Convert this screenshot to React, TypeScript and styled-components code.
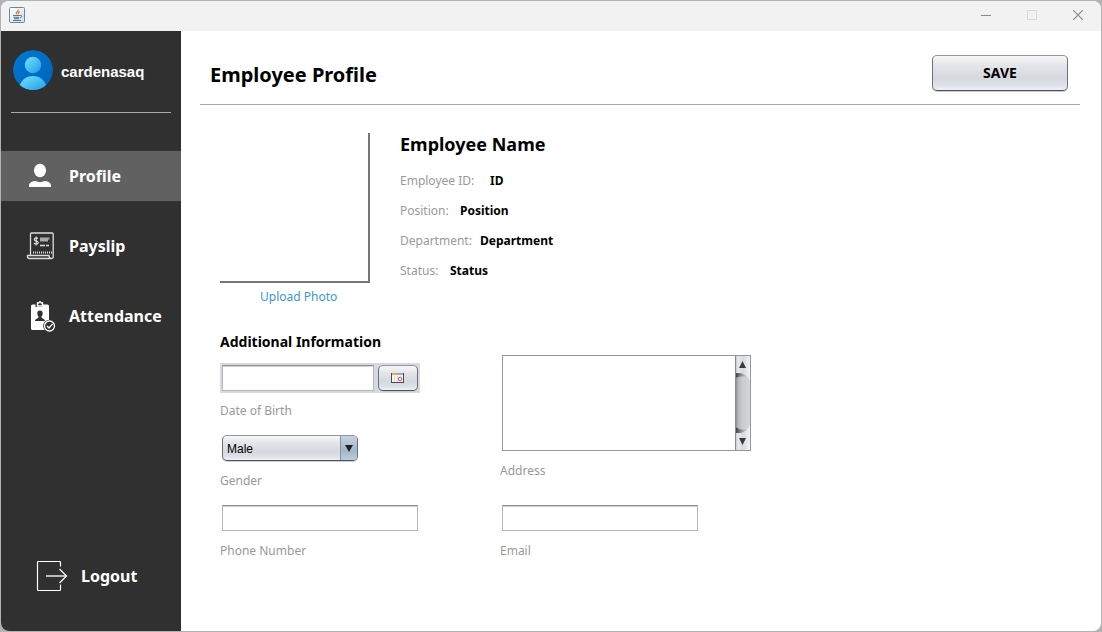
import React from "react";
import styled, { createGlobalStyle, css } from "styled-components";

const GlobalStyle = createGlobalStyle`
  * { box-sizing: border-box; }
  body {
    margin: 0;
    background: #b2b2b2;
    color: #000;
    font-family: "Noto Sans", "Open Sans", sans-serif;
    font-size: 12px;
  }
  button, input, select, textarea { font: inherit; color: inherit; margin: 0; }
  h1, h2, h3, p, dl, dd, dt { margin: 0; }
`;

const raised = css`
  border: 1px solid #6b6f78;
  border-top-color: #94989f;
  border-bottom-color: #4d525c;
  border-radius: 5px;
  background: linear-gradient(#f6f7f8 0%, #e2e4e8 30%, #d5d8de 65%, #dde1e8 85%, #eef1f6 100%);
  box-shadow: 0 1px 0 #c9ccd2;
`;

const Desktop = styled.div`
  display: flex;
  min-height: 100vh;
  padding: 1px;
`;

const Window = styled.div`
  display: flex;
  flex: 1;
  flex-direction: column;
  overflow: hidden;
  border-radius: 8px;
  background: #fff;
`;

const TitleBar = styled.header`
  display: flex;
  align-items: center;
  justify-content: space-between;
  height: 30px;
  padding: 0 0 2px 8px;
  background: #f2f2f2;
`;

const WindowControls = styled.div`
  display: flex;
`;

const WindowButton = styled.button`
  display: grid;
  place-items: center;
  width: 46px;
  height: 28px;
  padding: 0;
  border: 0;
  background: none;
  color: #8a8a8a;
  &:disabled { color: #dadada; }
`;

const Body = styled.div`
  display: flex;
  flex: 1;
`;

const Sidebar = styled.aside`
  display: flex;
  flex: 0 0 180px;
  flex-direction: column;
  padding-bottom: 30px;
  background: #303030;
  color: #fff;
`;

const User = styled.div`
  display: flex;
  align-items: center;
  gap: 8px;
  height: 82px;
  margin: 0 10px;
  padding: 0 2px 4px;
  border-bottom: 1px solid #a3a8ae;
  font: bold 15px "Liberation Sans", Arial, sans-serif;
`;

const UserName = styled.span`
  padding-top: 4px;
`;

const Nav = styled.nav`
  display: flex;
  flex: 1;
  flex-direction: column;
  gap: 20px;
  padding-top: 38px;
`;

const NavItem = styled.a<{ $active?: boolean; $last?: boolean }>`
  display: flex;
  align-items: center;
  gap: ${(p) => (p.$last ? 12 : 10)}px;
  height: 50px;
  margin-top: ${(p) => (p.$last ? "auto" : 0)};
  padding-left: ${(p) => (p.$last ? 34 : 24)}px;
  background: ${(p) => (p.$active ? "#616161" : "transparent")};
  color: #fff;
  font-size: 16px;
  font-weight: bold;
  text-decoration: none;
`;

const Main = styled.main`
  flex: 1;
  min-width: 0;
  padding: 0 21px 0 19px;
`;

const PageHeader = styled.div`
  display: flex;
  align-items: center;
  justify-content: space-between;
  height: 74px;
  padding: 10px 12px 0 10px;
  border-bottom: 1px solid #a3a6b1;
`;

const PageTitle = styled.h1`
  padding-top: 4px;
  font-size: 20px;
  line-height: 28px;
`;

const SaveButton = styled.button`
  ${raised}
  width: 136px;
  height: 36px;
  font-size: 14px;
  font-weight: bold;
`;

const Summary = styled.section`
  display: flex;
  gap: 30px;
  padding: 28px 20px 0;
`;

const PhotoColumn = styled.div`
  width: 150px;
`;

const Photo = styled.div`
  height: 150px;
  border: solid #75777e;
  border-width: 0 2px 2px 0;
`;

const UploadLink = styled.a`
  display: block;
  margin-left: 40px;
  color: #3c96d2;
  line-height: 28px;
  text-decoration: none;
`;

const EmployeeName = styled.h2`
  font-size: 18px;
  line-height: 22px;
`;

const Facts = styled.dl`
  padding-top: 11px;
`;

const Fact = styled.div`
  display: flex;
  line-height: 30px;
`;

const FactLabel = styled.dt<{ $width: number }>`
  width: ${(p) => p.$width}px;
  color: #999;
  white-space: nowrap;
`;

const FactValue = styled.dd`
  font-weight: bold;
`;

const Form = styled.form`
  display: flex;
  gap: 80px;
  padding: 20px 20px 0;
`;

const Column = styled.div`
  display: flex;
  flex-direction: column;
  gap: 12px;
  width: 200px;
`;

const AddressColumn = styled(Column)`
  gap: 22px;
  width: 253px;
  padding-top: 22px;
`;

const SectionTitle = styled.h3`
  height: 20px;
  font-size: 14px;
  line-height: 22px;
  white-space: nowrap;
`;

const Field = styled.div`
  display: flex;
  flex-direction: column;
  gap: 8px;
`;

const FieldLabel = styled.label`
  color: #999;
  line-height: 20px;
`;

const Control = styled.div`
  padding: 2px;
`;

const DateControl = styled(Control)`
  display: flex;
  gap: 4px;
  background: #d6d9df;
`;

const TextInput = styled.input`
  display: block;
  width: 100%;
  min-width: 0;
  height: 26px;
  padding: 2px 6px;
  border: 1px solid #b7b7b7;
  border-top-color: #8d8e8e;
  border-radius: 0;
  background: #fff;
  box-shadow: inset 0 1px 0 #d2d2d2;
`;

const LimitedInput = styled(TextInput)`
  width: 196px;
`;

const CalendarButton = styled.button`
  ${raised}
  display: grid;
  flex: 0 0 40px;
  place-items: center;
  height: 26px;
  padding: 0;
`;

const SelectBox = styled.div`
  ${raised}
  position: relative;
  width: 136px;
  height: 26px;
  overflow: hidden;
`;

const Select = styled.select`
  appearance: none;
  width: 100%;
  height: 24px;
  padding: 2px 22px 0 4px;
  border: 0;
  background: none;
  font: 12px "Liberation Sans", Arial, sans-serif;
`;

const SelectArrow = styled.span`
  position: absolute;
  inset: 0 0 0 auto;
  display: grid;
  place-items: center;
  width: 17px;
  border-left: 1px solid #8595a6;
  background: linear-gradient(#c5d3df, #a3b6c8 60%, #bccddd);
  pointer-events: none;
`;

const ScrollPane = styled.div`
  display: flex;
  height: 96px;
  border: 1px solid #9297a1;
`;

const AddressInput = styled.textarea`
  flex: 1;
  min-width: 0;
  padding: 4px;
  border: 0;
  background: #fff;
  resize: none;
  outline: none;
`;

const Scrollbar = styled.div`
  display: flex;
  flex: 0 0 15px;
  flex-direction: column;
`;

const JavaIcon = () => (
  <svg width="16" height="16" viewBox="0 0 16 16" aria-hidden="true">
    <defs>
      <linearGradient id="cup" x1="0" y1="0" x2="1" y2="1">
        <stop offset="0" stopColor="#fff" />
        <stop offset="1" stopColor="#cfdde6" />
      </linearGradient>
    </defs>
    <rect x=".5" y=".5" width="15" height="15" rx="1" fill="url(#cup)" stroke="#6f8796" />
    <path d="M9.500 2.500c.4 1.600-3.600 2.400-2 4.700M10.800 4.600C9.200 5.200 8.700 6 9.400 7.200" fill="none" stroke="#e8762b" strokeWidth="1.200" />
    <path d="M4 8.500h7M4.500 10.300h5.500M5 11.700h5M4 13.500h8M11 8.500c2.700-.5 2.700 1.900-.3 2.300" fill="none" stroke="#51788f" />
  </svg>
);

const Avatar = () => (
  <svg width="40" height="40" viewBox="0 0 40 40" aria-hidden="true">
    <defs>
      <linearGradient id="disc" x1="0" y1="0" x2="1" y2="1">
        <stop offset="0" stopColor="#0078d4" />
        <stop offset="1" stopColor="#0062b8" />
      </linearGradient>
      <linearGradient id="figure" x1="0" y1="0" x2="1" y2="1">
        <stop offset="0" stopColor="#7ae0ff" />
        <stop offset="1" stopColor="#1b9de2" />
      </linearGradient>
      <clipPath id="round"><circle cx="20" cy="20" r="20" /></clipPath>
    </defs>
    <g clipPath="url(#round)">
      <circle cx="20" cy="20" r="20" fill="url(#disc)" />
      <circle cx="20" cy="15" r="8.200" fill="url(#figure)" />
      <path d="M6.500 36C9 29 14 26 20 26s11 3 13.500 10v5h-27z" fill="url(#figure)" />
    </g>
  </svg>
);

const ProfileIcon = () => (
  <svg width="34" height="34" viewBox="0 0 34 34" fill="#fff" aria-hidden="true">
    <ellipse cx="15" cy="11.500" rx="6" ry="6.700" />
    <path d="M4 28v-1.500c0-2.500 3-4.500 7-4.500 1.500 1.500 6.500 1.500 8 0 4 0 7 2 7 4.500V28q-11 .2-22 0z" />
  </svg>
);

const PayslipIcon = () => (
  <svg width="34" height="34" viewBox="0 0 34 34" fill="none" stroke="#ddd" aria-hidden="true">
    <path d="M5.500 26.500V5q0-1 1-1h20.500q1.200 0 1.200 1.200V28q0 1.500-1.500 1.500H4q-2-.5-1.500-3h21.500q0 2.800 2 2.800" strokeWidth="1.300" />
    <path d="M8 23.500h19" strokeWidth="2" strokeDasharray="1 1" />
    <path d="M13 9.600c-.5-1-3.700-1-3.700.8s3.900 1.100 3.900 3.100-3.600 2-4.200.5M11.200 7.500v9" strokeWidth="1.200" />
    <path d="M15 9.500h9.500M15 11.500h8" strokeWidth="1.800" stroke="#aaa" />
    <path d="M15 16.500h5M21 16.500h3" strokeWidth="1.300" />
  </svg>
);

const AttendanceIcon = () => (
  <svg width="34" height="34" viewBox="1 0 34 34" aria-hidden="true">
    <path d="M7 7q0-1.500 1.500-1.500h3V8h7V5.500h5Q25 5.500 25 7v24H8.500Q7 31 7 29.500z" fill="#fff" />
    <path d="M13.500 4h1.200q1.300-2.500 2.600 0h1.200v3h-5z" fill="none" stroke="#fff" strokeWidth="1.400" />
    <path d="M16 11.500c-2 0-3 1.500-2.600 3.500.2 1.500.8 2 1.300 2.700 0 1.800-3.700 1.800-3.700 4.300h10c0-2.500-3.700-2.500-3.700-4.300.5-.7 1.100-1.200 1.300-2.700.4-2-.6-3.500-2.600-3.500z" fill="#303030" />
    <circle cx="25.500" cy="27" r="6.300" fill="#303030" />
    <circle cx="25.500" cy="27" r="5" fill="#303030" stroke="#fff" strokeWidth="1.300" />
    <path d="m23 27 2 2 3.500-4.200" fill="none" stroke="#fff" strokeWidth="1.300" />
  </svg>
);

const LogoutIcon = () => (
  <svg width="34" height="34" viewBox="0 0 34 34" fill="none" stroke="#fff" strokeWidth="1.200" aria-hidden="true">
    <path d="M25.500 7.500V3.500q0-1-1-1h-21q-1 0-1 1v27q0 1 1 1h21q1 0 1-1v-5" />
    <path d="M11 17h20" stroke="#bbb" strokeWidth="1.800" />
    <path d="m24.500 10 7 7-7 7" />
  </svg>
);

const CalendarIcon = () => (
  <svg width="14" height="12" viewBox="0 0 14 12" aria-hidden="true">
    <rect x=".5" y="1.500" width="12" height="9" fill="#f3f3f3" stroke="#4a4a4a" />
    <path d="M1 2h5" stroke="#f0a83c" strokeWidth="2" />
    <path d="M6 2h6" stroke="#8fb0dc" strokeWidth="2" />
    <path d="M3.500 4v6M6.500 4v6" stroke="#ddd" />
    <circle cx="9" cy="7" r="1.800" fill="#fff" stroke="#e05050" />
  </svg>
);

const ScrollbarArt = () => (
  <svg width="15" height="94" viewBox="0 0 15 94" aria-hidden="true">
    <defs>
      <linearGradient id="cap" x1="0" x2="1">
        <stop offset="0" stopColor="#b9bcc2" />
        <stop offset=".2" stopColor="#e6e8eb" />
        <stop offset=".55" stopColor="#d6dae0" />
        <stop offset="1" stopColor="#f0f2f4" />
      </linearGradient>
      <linearGradient id="track" x1="0" x2="1">
        <stop offset="0" stopColor="#777" />
        <stop offset=".2" stopColor="#b5b6ba" />
        <stop offset=".5" stopColor="#cbccd1" />
        <stop offset="1" stopColor="#d5d6da" />
      </linearGradient>
      <linearGradient id="shade" x1="0" x2="1">
        <stop offset="0" stopColor="#333" />
        <stop offset="1" stopColor="#999" stopOpacity=".2" />
      </linearGradient>
    </defs>
    <path d="M0 0h15v94H0z" fill="url(#cap)" />
    <path d="M0 17h4q8 1 11 8v44q-4 8-11 8H0z" fill="url(#track)" />
    <path d="M0 17h4q5 0 8 4-5-2-12 1zM0 77h4q5 0 8-4-5 2-12-2z" fill="url(#shade)" />
    <path d="M.5 0v94" stroke="#888b92" />
    <path d="m7.500 5 3.500 7H4zM7.500 89 4 82h7z" fill="#3a3a3a" />
  </svg>
);

const facts = [
  { label: "Employee ID:", value: "ID", width: 90 },
  { label: "Position:", value: "Position", width: 60 },
  { label: "Department:", value: "Department", width: 80 },
  { label: "Status:", value: "Status", width: 50 },
];

export default function App() {
  return (
    <Desktop>
      <GlobalStyle />
      <Window>
        <TitleBar>
          <JavaIcon />
          <WindowControls>
            <WindowButton aria-label="Minimize">
              <svg width="10" height="10"><path d="M0 5.500h10" stroke="currentColor" /></svg>
            </WindowButton>
            <WindowButton aria-label="Maximize" disabled>
              <svg width="10" height="10"><rect x=".5" y=".5" width="9" height="9" fill="none" stroke="currentColor" /></svg>
            </WindowButton>
            <WindowButton aria-label="Close">
              <svg width="10" height="10"><path d="m0 0 10 10M10 0 0 10" stroke="currentColor" strokeWidth="1.200" /></svg>
            </WindowButton>
          </WindowControls>
        </TitleBar>
        <Body>
          <Sidebar>
            <User>
              <Avatar />
              <UserName>cardenasaq</UserName>
            </User>
            <Nav>
              <NavItem href="#profile" $active><ProfileIcon />Profile</NavItem>
              <NavItem href="#payslip"><PayslipIcon />Payslip</NavItem>
              <NavItem href="#attendance"><AttendanceIcon />Attendance</NavItem>
              <NavItem href="#logout" $last><LogoutIcon />Logout</NavItem>
            </Nav>
          </Sidebar>
          <Main>
            <PageHeader>
              <PageTitle>Employee Profile</PageTitle>
              <SaveButton type="submit" form="details">SAVE</SaveButton>
            </PageHeader>
            <Summary>
              <PhotoColumn>
                <Photo />
                <UploadLink href="#upload">Upload Photo</UploadLink>
              </PhotoColumn>
              <div>
                <EmployeeName>Employee Name</EmployeeName>
                <Facts>
                  {facts.map((f) => (
                    <Fact key={f.label}>
                      <FactLabel $width={f.width}>{f.label}</FactLabel>
                      <FactValue>{f.value}</FactValue>
                    </Fact>
                  ))}
                </Facts>
              </div>
            </Summary>
            <Form id="details" onSubmit={(e) => e.preventDefault()}>
              <Column>
                <SectionTitle>Additional Information</SectionTitle>
                <Field>
                  <DateControl>
                    <TextInput id="birth" />
                    <CalendarButton type="button" aria-label="Choose date"><CalendarIcon /></CalendarButton>
                  </DateControl>
                  <FieldLabel htmlFor="birth">Date of Birth</FieldLabel>
                </Field>
                <Field>
                  <Control>
                    <SelectBox>
                      <Select id="gender" defaultValue="Male">
                        <option>Male</option>
                        <option>Female</option>
                      </Select>
                      <SelectArrow>
                        <svg width="8" height="8"><path d="M0 1h8L4 8z" fill="#222" /></svg>
                      </SelectArrow>
                    </SelectBox>
                  </Control>
                  <FieldLabel htmlFor="gender">Gender</FieldLabel>
                </Field>
                <Field>
                  <Control><TextInput id="phone" type="tel" /></Control>
                  <FieldLabel htmlFor="phone">Phone Number</FieldLabel>
                </Field>
              </Column>
              <AddressColumn>
                <Field>
                  <Control>
                    <ScrollPane>
                      <AddressInput id="address" />
                      <Scrollbar><ScrollbarArt /></Scrollbar>
                    </ScrollPane>
                  </Control>
                  <FieldLabel htmlFor="address">Address</FieldLabel>
                </Field>
                <Field>
                  <Control><LimitedInput id="email" type="email" /></Control>
                  <FieldLabel htmlFor="email">Email</FieldLabel>
                </Field>
              </AddressColumn>
            </Form>
          </Main>
        </Body>
      </Window>
    </Desktop>
  );
}
